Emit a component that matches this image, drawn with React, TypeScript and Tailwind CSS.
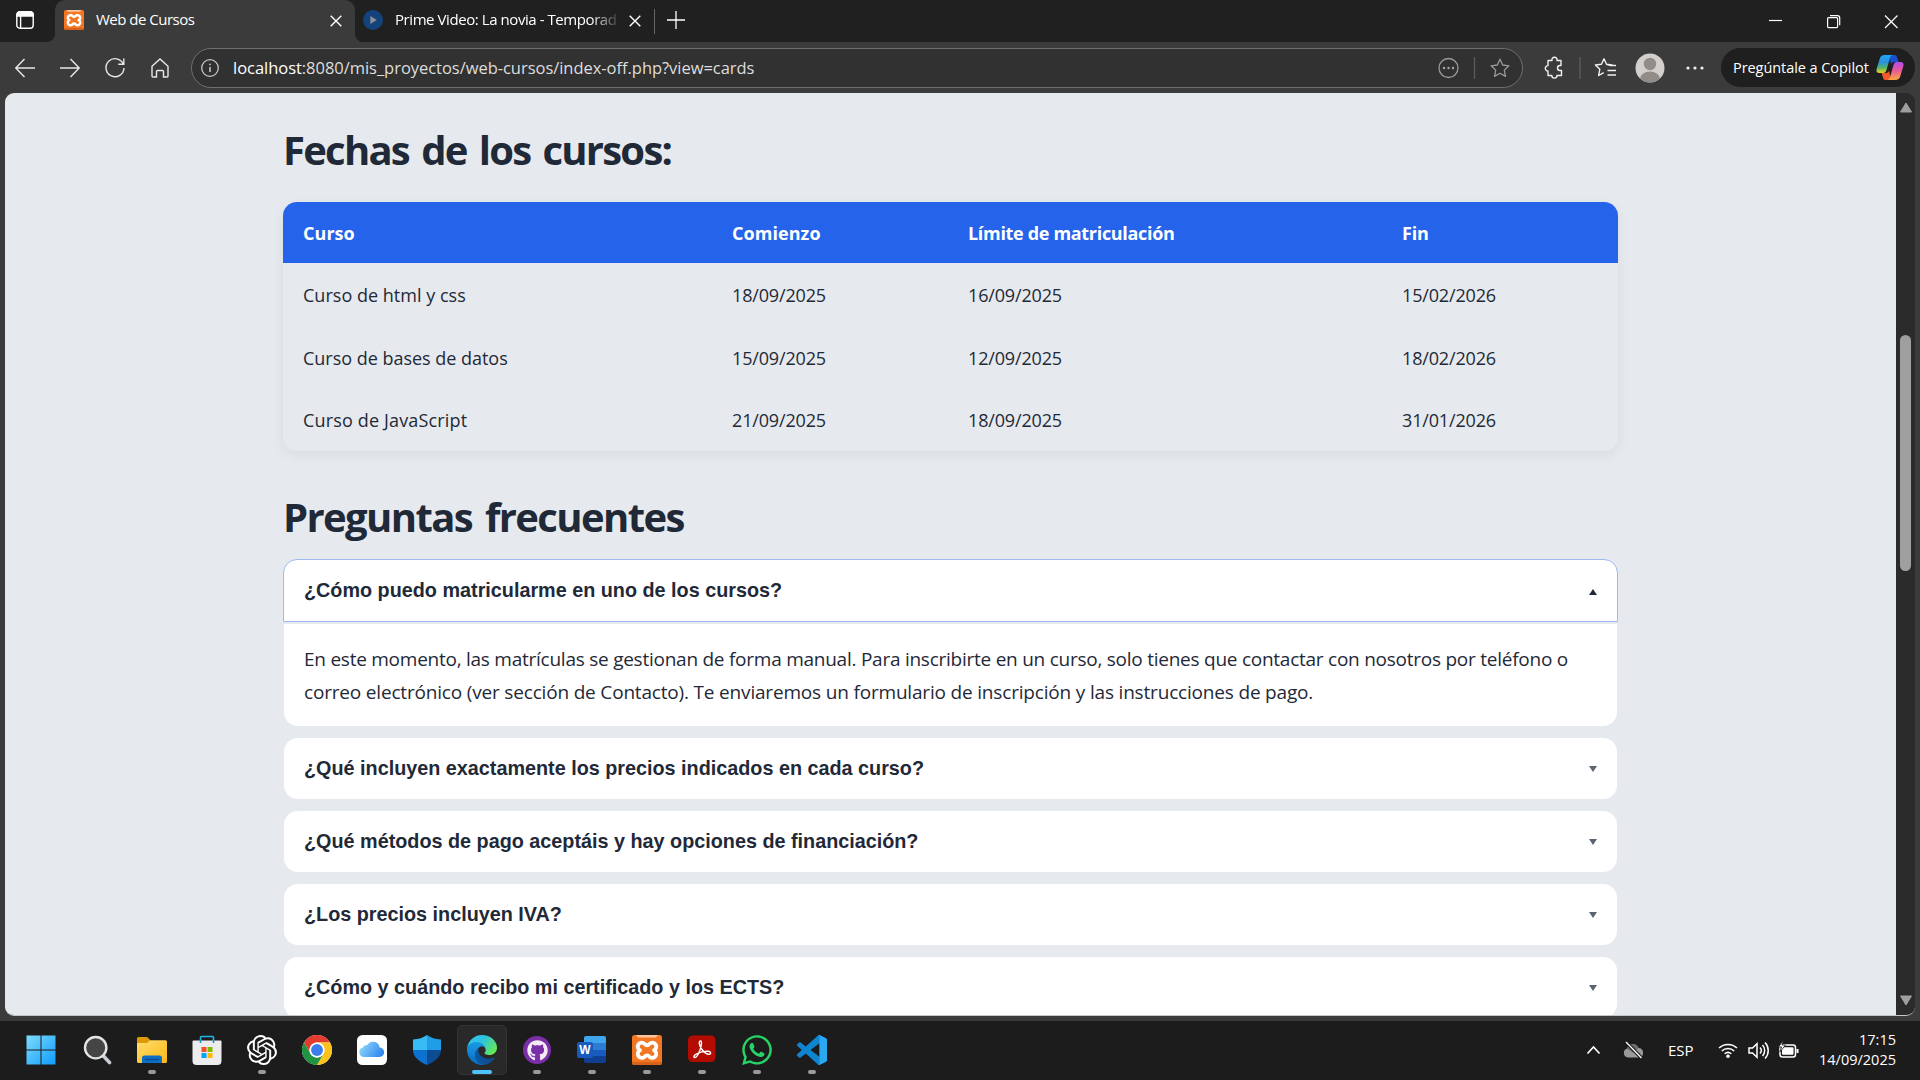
import React from 'react';
import { FaGithub, FaWhatsapp } from 'react-icons/fa';
import { SiOpenai } from 'react-icons/si';

const courses = [
  ['Curso de html y css', '18/09/2025', '16/09/2025', '15/02/2026'],
  ['Curso de bases de datos', '15/09/2025', '12/09/2025', '18/02/2026'],
  ['Curso de JavaScript', '21/09/2025', '18/09/2025', '31/01/2026'],
];

const nameTracking = ['tracking-[0.020px]', 'tracking-[-0.020px]', 'tracking-[0.160px]'];

const headers = [
  { label: 'Curso', tracking: 'tracking-[0.05px]' },
  { label: 'Comienzo', tracking: 'tracking-[0.05px]' },
  { label: 'Límite de matriculación', tracking: 'tracking-[-0.320px]' },
  { label: 'Fin', tracking: 'tracking-[-0.2px]' },
];

const questions = [
  '¿Qué incluyen exactamente los precios indicados en cada curso?',
  '¿Qué métodos de pago aceptáis y hay opciones de financiación?',
  '¿Los precios incluyen IVA?',
  '¿Cómo y cuándo recibo mi certificado y los ECTS?',
];

function CloseX({ className }: { className?: string }) {
  return (
    <svg className={className} width="12" height="12" viewBox="0 0 12 12" stroke="#fff" strokeWidth="1.4" fill="none">
      <path d="M.7.7l10.6 10.6M11.3.7L.7 11.3" />
    </svg>
  );
}

function Xampp({ size }: { size: number }) {
  return (
    <svg width={size} height={size} viewBox="0 0 30 30">
      <rect width="30" height="30" rx="2.5" fill="#f37623" />
      <path d="M4 0h22l-2 2.500H6z" fill="#fbc49b" />
      <path d="M0 27h30v.5a2.500 2.500 0 0 1-2.500 2.500h-25A2.500 2.500 0 0 1 0 27.500z" fill="#d9621a" />
      <path d="M12.500 8.800A4 4 0 1 0 8 15.300A4 4 0 1 0 12.500 21.800Q15 18.800 17.500 21.800A4 4 0 1 0 22 15.300A4 4 0 1 0 17.500 8.800Q15 11.800 12.500 8.800z" fill="none" stroke="#fff" strokeWidth="3.800" strokeLinejoin="round" />
    </svg>
  );
}

function TabStrip() {
  return (
    <div className="flex h-[42px] bg-[#202020]">
      <div className="w-[55px] pl-4 pt-[11px]">
        <svg width="18" height="18" viewBox="0 0 18 18" fill="none" stroke="#fff" strokeWidth="1.4">
          <rect x=".8" y=".8" width="16.4" height="16.4" rx="3" />
          <path d="M1 3.5A2.5 2.5 0 0 1 3.500 1h11A2.500 2.500 0 0 1 17 3.500V5H1z" fill="#fff" />
          <path d="M4.600 5v12" />
        </svg>
      </div>
      <div className="relative flex h-[42px] w-[300px] items-start rounded-t-[10px] bg-[#3b3b3b] pl-[9px] pt-[10px]">
        <svg className="absolute -left-2 bottom-0" width="8" height="8"><path d="M8 0v8H0A8 8 0 0 0 8 0z" fill="#3b3b3b" /></svg>
        <svg className="absolute -right-2 bottom-0" width="8" height="8"><path d="M0 0v8h8A8 8 0 0 1 0 0z" fill="#3b3b3b" /></svg>
        <Xampp size={20} />
        <span className="ml-3 whitespace-nowrap text-[15px] leading-[19px] tracking-[-0.5px] text-white">Web de Cursos</span>
        <CloseX className="absolute left-[275px] top-[15px]" />
      </div>
      <div className="flex w-[299px] items-start pl-2 pt-[10px]">
        <svg width="20" height="20" viewBox="0 0 20 20">
          <circle cx="10" cy="10" r="10" fill="#14427d" />
          <path d="M7.300 6l6.500 4-6.500 4z" fill="#8b8f96" />
        </svg>
        <div className="ml-3 w-[222px] overflow-hidden whitespace-nowrap text-[15px] leading-[19px] tracking-[-0.430px] text-white [mask-image:linear-gradient(to_right,#000_88%,rgba(0,0,0,0.15))]">
          Prime Video: La novia - Temporad
        </div>
        <CloseX className="ml-3 mt-[5px]" />
      </div>
      <div className="mt-[9px] h-[25px] w-px bg-[#666]" />
      <svg className="ml-3 mt-[11px]" width="18" height="18" stroke="#fff" strokeWidth="1.300"><path d="M9 0v18M0 9h18" /></svg>
      <div className="flex-1" />
      <svg className="mr-[15px] mt-[14px]" width="136" height="16" viewBox="0 0 136 16" fill="none" stroke="#fff" strokeWidth="1.200">
        <path d="M0 6.500h13" />
        <rect x="58.600" y="3.600" width="10" height="10" rx="1" />
        <path d="M61 1.600h7.500a2.200 2.200 0 0 1 2.200 2.200v7.500" />
        <path d="M116 1.500l12.500 12.500M128.500 1.500L116 14" />
      </svg>
    </div>
  );
}

function CopilotLogo() {
  return (
    <svg width="28" height="27" viewBox="0 0 28 27">
      <defs>
        <linearGradient id="ca" x1="0" y1="0" x2="0" y2="1"><stop offset="0" stopColor="#1ba8f5" /><stop offset=".4" stopColor="#2b8fe0" /><stop offset=".7" stopColor="#52b46a" /><stop offset="1" stopColor="#f3d31b" /></linearGradient>
        <linearGradient id="cb" x1="0" y1="0" x2="0" y2="1"><stop offset="0" stopColor="#b04df0" /><stop offset=".45" stopColor="#e8569c" /><stop offset="1" stopColor="#fba63f" /></linearGradient>
      </defs>
      <path d="M13 1h5.500c1.700 0 2.300 1.300 2.800 3l1.200 4h-4.500c-2 0-2.600 1-3 2.500z" fill="#1a4fd0" />
      <path d="M15 26H9.500c-1.700 0-2.200-1.300-2.700-3L5.700 19H10c2 0 2.600-1 3-2.500z" fill="#f2592b" />
      <path d="M8.500 1h8c-1.500.3-2.200 1.700-2.700 3.500L10.500 16c-.5 1.800-1.500 3-3.500 3H3.500C1 19 0 17.500.6 15L3.800 4.500C4.500 2.300 6 1 8.500 1z" fill="url(#ca)" />
      <path d="M19.500 26h-8c1.500-.3 2.200-1.700 2.700-3.500L17.500 11c.5-1.800 1.500-3 3.500-3h3.500c2.500 0 3.500 1.500 2.900 4l-3.200 10.500C23.500 24.700 22 26 19.500 26z" fill="url(#cb)" />
    </svg>
  );
}

const STAR = 'M10 1.200l2.700 5.800 6.200.8-4.600 4.300 1.200 6.300L10 15.300l-5.500 3.100 1.200-6.300L1.100 7.800l6.200-.8z';

function Toolbar() {
  return (
    <div className="flex h-[51px] items-center bg-[#3b3b3b]">
      <svg className="ml-[15px]" width="156" height="22" viewBox="0 0 156 22" fill="none" stroke="#e8e8e8" strokeWidth="1.400">
        <path d="M20 11H.8M9.500 2L.8 11l8.700 9" />
        <path d="M45 11h19.200M55.500 2l8.700 9-8.700 9" />
        <path d="M108.300 7.200A9 9 0 1 0 109 11M108.800 1.500v5.800h-5.500" />
        <path d="M137 9.300l8-7.300 8 7.300V19a1 1 0 0 1-1 1h-3.500v-5.500a1 1 0 0 0-1-1h-5a1 1 0 0 0-1 1V20H138a1 1 0 0 1-1-1z" />
      </svg>
      <div className="ml-5 flex h-10 w-[1332px] items-center rounded-full border border-[#6f6f6f] bg-[#313131] pl-[9px]">
        <svg width="18" height="18" viewBox="0 0 18 18" fill="none" stroke="#c6c6c6" strokeWidth="1.300">
          <circle cx="9" cy="9" r="8.300" /><path d="M9 8v5M9 4.700v1.600" strokeWidth="1.600" />
        </svg>
        <span className="ml-[14px] whitespace-nowrap text-[16.500px] leading-6 tracking-[-0.035px] text-[#dedede]"><span className="text-white">localhost</span>:8080/mis_proyectos/web-cursos/index-off.php?view=cards</span>
        <div className="flex-1" />
        <svg className="mr-[11px]" width="73" height="22" viewBox="0 0 73 22" fill="none" stroke="#9a9a9a" strokeWidth="1.300">
          <circle cx="10.500" cy="11" r="9.500" />
          <g fill="#a8a8a8" stroke="none"><circle cx="6" cy="11" r="1.200" /><circle cx="10.500" cy="11" r="1.200" /><circle cx="15" cy="11" r="1.200" /></g>
          <path d="M36.500 0v22" stroke="#5c5c5c" />
          <path d={STAR} transform="translate(52 1)" strokeLinejoin="round" />
        </svg>
      </div>
      <svg className="ml-[21px]" width="92" height="24" viewBox="0 0 92 24" fill="none" stroke="#f0f0f0" strokeWidth="1.400" strokeLinejoin="round">
        <path d="M4 4.500h4a2.600 2.600 0 1 1 5 0h4V9.500h-1a2.500 2.500 0 0 0 0 5h1.500v5H13a2.600 2.600 0 0 1-5.200 0H4V15a2.700 2.700 0 1 1 0-5.400z" />
        <path d="M36 1v22" stroke="#5c5c5c" />
        <path d="M63.500 9H68l-5.500-.8L60 2.800l-2.600 5.400-6 .8 4.400 4.200-1.100 6.300 5-2.900" />
        <path d="M66 9.500h6M63.500 14.500h8.500M63.500 19h8.500" />
      </svg>
      <svg className="-ml-px" width="30" height="30" viewBox="0 0 30 30">
        <clipPath id="av"><circle cx="15" cy="15" r="14.500" /></clipPath>
        <g clipPath="url(#av)"><rect width="30" height="30" fill="#d2cfcc" /><circle cx="15" cy="11" r="6.200" fill="#918c88" /><ellipse cx="15" cy="26" rx="10" ry="7.500" fill="#918c88" /></g>
      </svg>
      <svg className="ml-[21px]" width="18" height="4" fill="#f0f0f0"><circle cx="2" cy="2" r="1.600" /><circle cx="9" cy="2" r="1.600" /><circle cx="16" cy="2" r="1.600" /></svg>
      <div className="ml-auto mr-[5px] flex h-[39px] w-[194px] items-center rounded-full bg-[#1f1f1f] pl-3">
        <span className="w-[143px] whitespace-nowrap text-[14.500px] leading-5 tracking-[-0.060px] text-white">Pregúntale a Copilot</span>
        <CopilotLogo />
      </div>
    </div>
  );
}

function Faq() {
  return (
    <div className="mt-[14px] font-['Liberation_Sans',sans-serif] text-[19.800px] font-bold">
      <div className="flex h-[63px] items-center justify-between rounded-t-[14px] border border-[#9db9ef] bg-white px-5">
        <span>¿Cómo puedo matricularme en uno de los cursos?</span>
        <svg className="mt-[2px]" width="8" height="6"><path d="M4 0l4 6H0z" fill="#1f2937" /></svg>
      </div>
      <div className="mx-px mt-[2px] h-[102px] rounded-b-[14px] bg-white pl-5 pt-[19px] font-['Open_Sans',sans-serif] text-[19px] font-normal leading-[33px]">
        <p className="whitespace-nowrap tracking-[-0.248px]">En este momento, las matrículas se gestionan de forma manual. Para inscribirte en un curso, solo tienes que contactar con nosotros por teléfono o</p>
        <p className="whitespace-nowrap tracking-[-0.180px]">correo electrónico (ver sección de Contacto). Te enviaremos un formulario de inscripción y las instrucciones de pago.</p>
      </div>
      {questions.map((q) => (
        <div key={q} className="mx-px mt-3 flex h-[61px] items-center justify-between rounded-[14px] bg-white px-5">
          <span>{q}</span>
          <svg className="mt-px" width="8" height="6"><path d="M0 0h8L4 6z" fill="#5b6470" /></svg>
        </div>
      ))}
    </div>
  );
}

function Page() {
  return (
    <div className="ml-[5px] flex h-[923px] w-[1910px] overflow-hidden rounded-[9px] border-b border-[#c4c7ca] bg-[#2b2b2b]">
      <main className="h-[923px] w-[1891px] overflow-hidden bg-[#e6eaef] pl-[278px] text-[#1f2937]">
        <div className="w-[1335px]">
          <h2 className="mt-[29px] text-[40px] font-bold leading-[56px] tracking-[-1.750px] [word-spacing:3.500px]">Fechas de los cursos:</h2>
          <div className="mt-6 h-[249px] overflow-hidden rounded-[14px] shadow-[0_4px_14px_rgba(0,0,0,0.06)]">
            <table className="w-full table-fixed border-collapse text-left text-[18px]">
              <colgroup><col className="w-[429px]" /><col className="w-[236px]" /><col className="w-[434px]" /><col /></colgroup>
              <thead>
                <tr className="h-[61px] bg-[#2563eb] text-white">
                  {headers.map((h) => (
                    <th key={h.label} className="pl-5 pt-0.5 font-bold"><span className={h.tracking}>{h.label}</span></th>
                  ))}
                </tr>
              </thead>
              <tbody>
                {courses.map((row, r) => (
                  <tr key={row[0]} className="h-[62.500px] border-b border-[#e4e8ea]">
                    {row.map((c, i) => <td key={i} className="pl-5 pt-[3px]"><span className={i ? 'tracking-[-0.160px]' : nameTracking[r]}>{c}</span></td>)}
                  </tr>
                ))}
              </tbody>
            </table>
          </div>
          <h2 className="mt-[38px] text-[40px] font-bold leading-[56px] tracking-[-1.600px] [word-spacing:4px]">Preguntas frecuentes</h2>
          <Faq />
        </div>
      </main>
      <div className="flex flex-1 flex-col items-center py-[9px]">
        <svg width="14" height="11"><path d="M7 1l5.500 9h-11z" fill="#9f9f9f" stroke="#9f9f9f" strokeLinejoin="round" /></svg>
        <div className="mt-[222px] h-[236px] w-[11px] rounded-full bg-[#9f9f9f]" />
        <svg className="mt-auto" width="14" height="11"><path d="M7 10l5.500-9h-11z" fill="#9f9f9f" stroke="#9f9f9f" strokeLinejoin="round" /></svg>
      </div>
    </div>
  );
}

const icons: { el: React.ReactNode; run?: boolean; active?: boolean }[] = [
  { el: (
    <svg className="-ml-[3px]" width="30" height="30" viewBox="0 0 30 30"><defs><linearGradient id="w" x1="0" y1="0" x2="1" y2="1"><stop stopColor="#7fdcfb" /><stop offset="1" stopColor="#0f9bfb" /></linearGradient></defs>
      <path d="M.5 .5h14v14H.5zM15.500 .5h14v14h-14zM.5 15.500h14v14H.5zM15.500 15.500h14v14h-14z" fill="url(#w)" /></svg>) },
  { el: (
    <svg className="ml-[2px]" width="30" height="30" viewBox="0 0 30 30"><path d="M19.500 20l7 7.500" stroke="#c9ccd2" strokeWidth="3.600" strokeLinecap="round" /><circle cx="12.700" cy="12.700" r="10.700" fill="#454545" stroke="#e3e4e8" strokeWidth="2.400" /></svg>) },
  { run: true, el: (
    <svg width="30" height="30" viewBox="0 0 30 30"><defs><linearGradient id="fo" x1="0" y1="0" x2="1" y2="1"><stop stopColor="#ffde6e" /><stop offset="1" stopColor="#fdb813" /></linearGradient></defs>
      <path d="M0 3.500A1.500 1.500 0 0 1 1.500 2h8.700L13 4.800V9H0z" fill="#dc9a06" /><path d="M0 8h10l3-2.700h15.500A1.500 1.500 0 0 1 30 6.800V26.500a1.500 1.500 0 0 1-1.500 1.500h-27A1.500 1.500 0 0 1 0 26.500z" fill="url(#fo)" />
      <path d="M5 28v-5a2.500 2.500 0 0 1 2.500-2.500h15A2.500 2.500 0 0 1 25 23v5z" fill="#0b6dc4" /><path d="M8 24.500h14" stroke="#0b4a8c" strokeWidth="1.200" /></svg>) },
  { el: (
    <svg width="30" height="30" viewBox="0 0 30 30"><path d="M8.500 8V2.500a1 1 0 0 1 1-1h11a1 1 0 0 1 1 1V8" fill="none" stroke="#23b5e8" strokeWidth="1.600" /><path d="M.5 6.500a1 1 0 0 1 1-1h27a1 1 0 0 1 1 1V26a4 4 0 0 1-4 4h-21a4 4 0 0 1-4-4z" fill="#ececee" />
      <path d="M9.500 12h5v5h-5z" fill="#f25022" /><path d="M15.500 12h5v5h-5z" fill="#7fba00" /><path d="M9.500 18h5v5h-5z" fill="#00a4ef" /><path d="M15.500 18h5v5h-5z" fill="#ffb900" /><path d="M8.500 5v3M21.500 5v3" stroke="#1792c4" strokeWidth="1.600" /></svg>) },
  { run: true, el: <SiOpenai size={30} color="#fff" /> },
  { el: (
    <svg width="30" height="30" viewBox="0 0 48 48"><circle cx="24" cy="24" r="24" fill="#fff" /><path d="M24 12h20.800A24 24 0 0 0 3.200 12l10.400 18A12 12 0 0 1 24 12z" fill="#e33b2e" /><path d="M34.400 30L24 48A24 24 0 0 0 44.800 12H24a12 12 0 0 1 10.400 18z" fill="#fcc31e" /><path d="M13.600 30L3.200 12A24 24 0 0 0 24 48l10.400-18a12 12 0 0 1-20.800 0z" fill="#229342" /><circle cx="24" cy="24" r="12" fill="#fff" /><circle cx="24" cy="24" r="9.500" fill="#3b7ded" /></svg>) },
  { el: (
    <svg width="30" height="30" viewBox="0 0 30 30"><defs><linearGradient id="ic" x1="0" y1=".3" x2="1" y2=".7"><stop stopColor="#8fd8fb" /><stop offset="1" stopColor="#2d84f0" /></linearGradient></defs><rect width="30" height="30" rx="5.500" fill="#fff" /><path d="M7 22a4.800 4.800 0 0 1-1.200-9.400 4.200 4.200 0 0 1 4.500-2.500 6.500 6.500 0 0 1 12.200 2.500A4.700 4.700 0 0 1 22.500 22z" fill="url(#ic)" /></svg>) },
  { el: (
    <svg width="30" height="30" viewBox="0 0 30 30"><path d="M15 0c4 2.800 8 4.200 14 4.500V15H15z" fill="#1f9de6" /><path d="M15 0C11 2.800 7 4.200 1 4.500V15h14z" fill="#37bdf3" /><path d="M1 15h14v15C7 26.500 1 22 1 15z" fill="#0d72cf" /><path d="M29 15H15v15c8-3.500 14-8 14-15z" fill="#0c4c94" /></svg>) },
  { run: true, active: true, el: (
    <svg width="30" height="30" viewBox="0 0 256 256"><defs>
      <linearGradient id="e1" x1="0" x2="1"><stop stopColor="#0c59a4" /><stop offset="1" stopColor="#114a8b" /></linearGradient>
      <linearGradient id="e2" x1=".6" y1="0" x2=".4" y2="1"><stop stopColor="#1b9de2" /><stop offset=".5" stopColor="#1388d9" /><stop offset="1" stopColor="#0669bc" /></linearGradient>
      <linearGradient id="e3" x1="0" y1=".2" x2="1" y2=".7"><stop stopColor="#35c1f1" /><stop offset=".45" stopColor="#2ec3df" /><stop offset="1" stopColor="#66eb4e" /></linearGradient></defs>
      <g transform="translate(-4.630 -4.920)">
        <path fill="url(#e1)" d="M235.680 195.460a93.730 93.730 0 0 1-10.540 4.710 101.870 101.870 0 0 1-35.900 6.460c-47.320 0-88.540-32.550-88.540-74.320A31.480 31.480 0 0 1 117.130 105c-42.800 1.800-53.800 46.400-53.800 72.530 0 73.880 68.090 81.370 82.760 81.370 7.910 0 19.840-2.300 27-4.560l1.310-.44a128.340 128.340 0 0 0 66.600-52.800 4 4 0 0 0-5.320-5.640z" />
        <path fill="url(#e2)" d="M110.340 246.340A79.200 79.200 0 0 1 87.600 225a80.720 80.720 0 0 1 29.530-120c3.120-1.470 8.450-4.130 15.540-4a32.350 32.350 0 0 1 25.690 13 31.880 31.880 0 0 1 6.360 18.660c0-.21 24.460-79.600-80-79.600-43.900 0-80 41.660-80 78.210a130.150 130.150 0 0 0 12.110 56 128 128 0 0 0 156.380 67.110 75.550 75.550 0 0 1-62.780-8z" />
        <path fill="url(#e3)" d="M156.940 153.780c-.81 1.050-3.300 2.500-3.300 5.660 0 2.610 1.700 5.120 4.720 7.230 14.380 10 41.490 8.680 41.560 8.680a59.560 59.560 0 0 0 30.270-8.350 61.380 61.380 0 0 0 30.430-52.880c.26-22.410-8-37.310-11.340-43.910C228.090 28.760 182.350 4.920 132.610 4.920a128 128 0 0 0-128 126.200c.48-36.540 36.800-66.050 80-66.050 3.500 0 23.460.34 42 10.070 16.340 8.580 24.900 18.940 30.850 29.210 6.180 10.670 7.280 24.150 7.280 29.520s-2.740 13.330-7.800 19.910z" />
      </g></svg>) },
  { run: true, el: <div className="flex h-7 w-7 items-center justify-center rounded-full bg-[#7a2ea8]"><FaGithub size={21} color="#f3ecf7" /></div> },
  { run: true, el: (
    <div className="relative h-[30px] w-[30px]">
      <div className="absolute left-[7px] top-[1px] flex h-[27px] w-[22px] flex-col overflow-hidden rounded-[2px]"><i className="flex-1 bg-[#41a5ee]" /><i className="flex-1 bg-[#2b7cd3]" /><i className="flex-1 bg-[#185abd]" /><i className="flex-1 bg-[#103f91]" /></div>
      <div className="absolute left-0 top-[7px] flex h-4 w-4 items-center justify-center rounded-[2px] bg-[#185abd] font-['Liberation_Sans',sans-serif] text-[12px] font-bold leading-none text-white">W</div>
    </div>) },
  { run: true, el: <Xampp size={30} /> },
  { run: true, el: (
    <svg width="30" height="30" viewBox="0 0 30 30"><rect x="1" y="0.500" width="27.500" height="26.500" rx="4.500" fill="#b30b00" /><path d="M13.500 6c-2 0-1.500 4 .8 7.500 2 3 5.200 5.800 7.700 5.800s2-2.800-.8-3c-3.500-.2-8.500 1-11.500 2.500-2.500 1.200-3.500 3.200-2.200 3.700 1.600.5 4-3.500 5.500-7.500 1.300-3.500 2.300-9 .5-9z" fill="none" stroke="#fff" strokeWidth="1.400" /></svg>) },
  { run: true, el: <FaWhatsapp size={34} color="#25d366" className="-m-[2px]" /> },
  { run: true, el: (
    <svg width="30" height="30" viewBox="0 0 24 24"><path fill="#0f84cf" d="M23.150 2.587L18.210.21a1.494 1.494 0 0 0-1.705.29l-9.460 8.630-4.120-3.128a.999.999 0 0 0-1.276.057L.327 7.261A1 1 0 0 0 .326 8.740L3.899 12 .326 15.260a1 1 0 0 0 .001 1.479L1.650 17.940a.999.999 0 0 0 1.276.057l4.120-3.128 9.460 8.630a1.492 1.492 0 0 0 1.704.29l4.942-2.377A1.500 1.500 0 0 0 24 20.060V3.939a1.500 1.500 0 0 0-.850-1.352zm-5.146 14.861L10.826 12l7.178-5.448v10.896z" /><path fill="#2aa9f2" d="M23.150 2.587L18.210.21a1.494 1.494 0 0 0-1.400.080c.7 0 1.200.5 1.200 1.300v20.820c0 .8-.5 1.300-1.200 1.300.4.200.9.300 1.400.080l4.942-2.377A1.500 1.500 0 0 0 24 20.060V3.939a1.500 1.500 0 0 0-.850-1.352z" /></svg>) },
];

function Taskbar() {
  return (
    <div className="mt-[5px] flex h-[59px] bg-[#1c1c1c] pl-[14.500px]">
      {icons.map((it, i) => (
        <div key={i} className="relative flex h-[58px] w-[55px] items-center justify-center">
          {it.active && <div className="absolute left-[2.500px] top-1 h-[50px] w-[50px] rounded-[5px] border border-[#333] bg-[#292929]" />}
          <div className="relative">{it.el}</div>
          {it.run && <div className={it.active ? 'absolute left-[17.500px] top-[49px] h-1 w-5 rounded-full bg-[#4cc2ff]' : 'absolute left-[23.500px] top-[49px] h-1 w-2 rounded-full bg-[#9a9a9a]'} />}
        </div>
      ))}
      <div className="flex h-[57px] flex-1 items-center justify-end">
        <svg width="58" height="20" viewBox="0 0 58 20" fill="none">
          <path d="M1.500 13.500L7.500 7l6 6.500" stroke="#fff" strokeWidth="1.700" />
          <path d="M42 17.500a4.600 4.600 0 0 1-.8-9 6 6 0 0 1 11.300-.5 4.800 4.800 0 0 1 .7 9.500z" fill="#9a9a9a" /><path d="M41 8.500a6 6 0 0 1 11.500-.5l-5 5z" fill="#6b6b6b" /><path d="M40 2l15.500 16" stroke="#1c1c1c" strokeWidth="3.500" /><path d="M40 2l15.500 16" stroke="#fff" strokeWidth="1.300" />
        </svg>
        <span className="ml-6 w-[50px] text-[15px] leading-5 text-white">ESP</span>
        <svg width="81" height="20" viewBox="0 0 81 20" fill="none" stroke="#fff" strokeWidth="1.500">
          <path d="M1 8a13 13 0 0 1 18 0M3.800 11a9 9 0 0 1 12.400 0M6.700 13.800a5 5 0 0 1 6.600 0" /><circle cx="10" cy="16.200" r="1.800" fill="#fff" stroke="none" />
          <path d="M31 8h3.500L39 3.700v13.600L34.500 13H31zM42 7.500a4.500 4.500 0 0 1 0 6M44.500 5a8 8 0 0 1 0 11M47 2.500a11.500 11.500 0 0 1 0 16" />
          <rect x="62" y="5" width="15.500" height="12" rx="2.500" /><rect x="64" y="7.300" width="11.500" height="7.500" rx="1" fill="#fff" stroke="none" /><path d="M78.500 9v4h2V9z" fill="#fff" stroke="none" /><path d="M65.500 0l-5 7h3l-1.500 5 5.500-7H64z" fill="#fff" stroke="#1c1c1c" strokeWidth=".8" />
        </svg>
        <div className="mr-6 w-[97px] text-right text-[14.500px] leading-5 text-white">
          <div>17:15</div>
          <div>14/09/2025</div>
        </div>
      </div>
    </div>
  );
}

export default function App() {
  return (
    <div className="h-[1080px] w-[1920px] overflow-hidden bg-[#3b3b3b] font-['Open_Sans',sans-serif]">
      <TabStrip />
      <Toolbar />
      <Page />
      <Taskbar />
    </div>
  );
}
